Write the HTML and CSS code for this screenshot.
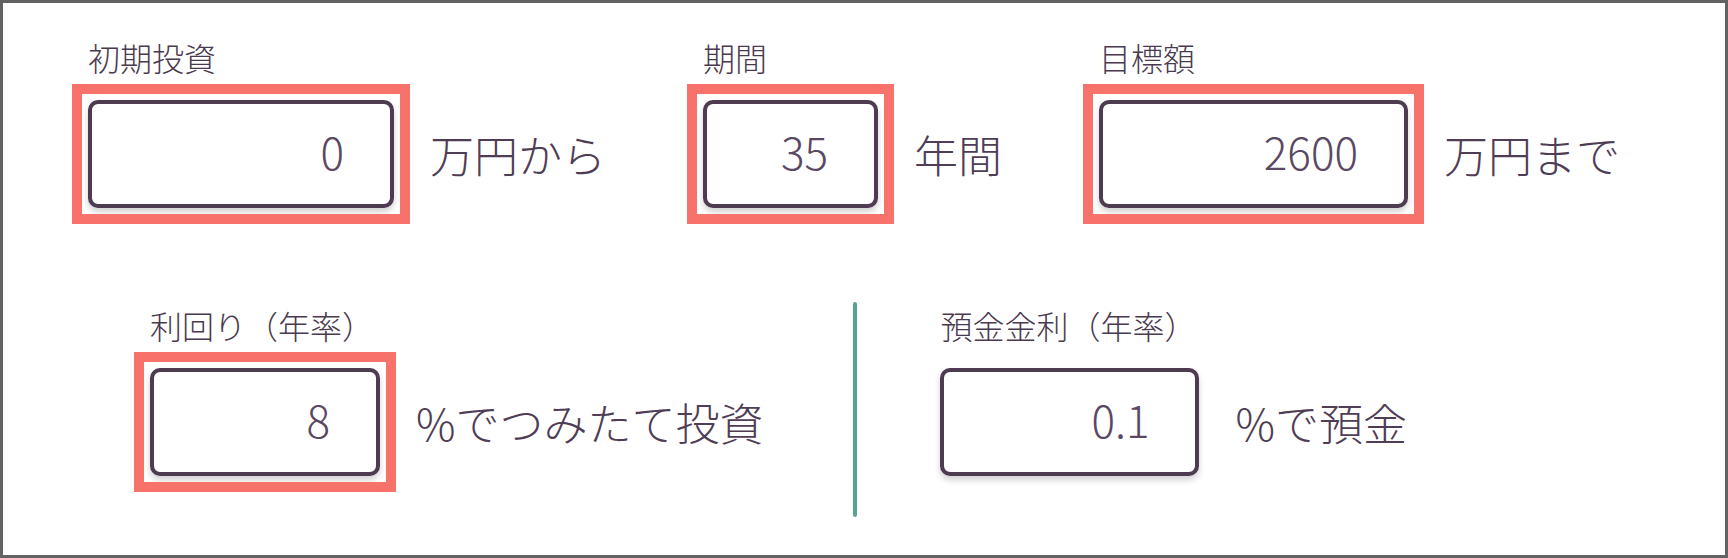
FILE: index.html
```html
<!DOCTYPE html>
<html lang="ja">
<head>
  <meta charset="UTF-8" />
  <title>つみたてシミュレーション</title>
  <link rel="stylesheet" href="styles.css">
</head>
<body>
  <div class="panel">
    <div class="row row-top">
      <div class="field">
        <div class="field-label">初期投資</div>
        <div class="field-body">
          <span class="mark"><input class="num w-306" type="text" value="0"></span>
          <span class="unit">万円から</span>
        </div>
      </div>
      <div class="field">
        <div class="field-label">期間</div>
        <div class="field-body">
          <span class="mark"><input class="num w-175" type="text" value="35"></span>
          <span class="unit">年間</span>
        </div>
      </div>
      <div class="field">
        <div class="field-label">目標額</div>
        <div class="field-body">
          <span class="mark"><input class="num w-309" type="text" value="2600"></span>
          <span class="unit">万円まで</span>
        </div>
      </div>
    </div>

    <div class="row row-bottom">
      <div class="field">
        <div class="field-label">利回り（年率）</div>
        <div class="field-body">
          <span class="mark"><input class="num w-230" type="text" value="8"></span>
          <span class="unit">%でつみたて投資</span>
        </div>
      </div>
      <div class="divider"></div>
      <div class="field">
        <div class="field-label">預金金利（年率）</div>
        <div class="field-body">
          <span class="plain"><input class="num w-259" type="text" value="0.1"></span>
          <span class="unit">%で預金</span>
        </div>
      </div>
    </div>
  </div>
</body>
</html>
```

FILE: styles.css
```css
body {
  margin: 0;
  padding: 0;
  font-family: "Noto Sans CJK JP", "Noto Sans", sans-serif;
  font-weight: 300;
  background: #fff;
}
.panel {
  width: 1728px;
  height: 558px;
  box-sizing: border-box;
  border: 3px solid #626262;
  background: #fff;
  padding: 38px 0 0 85px;
}
.row {
  display: flex;
  align-items: flex-start;
}
.row-top {
  gap: 97px;
}
.row-bottom {
  margin-top: 94px;
  padding-left: 62px;
}
.field-label {
  font-size: 32px;
  line-height: 32px;
  color: #4a3a4f;
  margin-bottom: 27px;
  white-space: nowrap;
}
.field-body {
  display: flex;
  align-items: center;
}
.mark, .plain {
  display: block;
}
.mark {
  outline: 10px solid #f7726a;
  outline-offset: 6px;
}
input.num {
  display: block;
  box-sizing: border-box;
  height: 108px;
  border: 4px solid #4e3b52;
  border-radius: 10px;
  padding: 0 46px 6px 0;
  text-align: right;
  font-family: "Noto Sans CJK JP", "Noto Sans", sans-serif;
  font-weight: 300;
  font-size: 44px;
  color: #5b4862;
  background: #fff;
  box-shadow: 0 4px 6px rgba(0,0,0,0.18);
  outline: none;
}
.w-306 { width: 306px; }
.w-175 { width: 175px; }
.w-309 { width: 309px; }
.w-230 { width: 230px; }
.w-259 { width: 259px; }
.unit {
  margin-left: 36px;
  font-size: 44px;
  color: #4f3d55;
  white-space: nowrap;
}
.row-bottom .field {
  padding-top: 7px;
}
.divider {
  width: 4px;
  height: 215px;
  border-radius: 2px;
  background: #5aa394;
  margin: 0 83px 0 90px;
}
```
